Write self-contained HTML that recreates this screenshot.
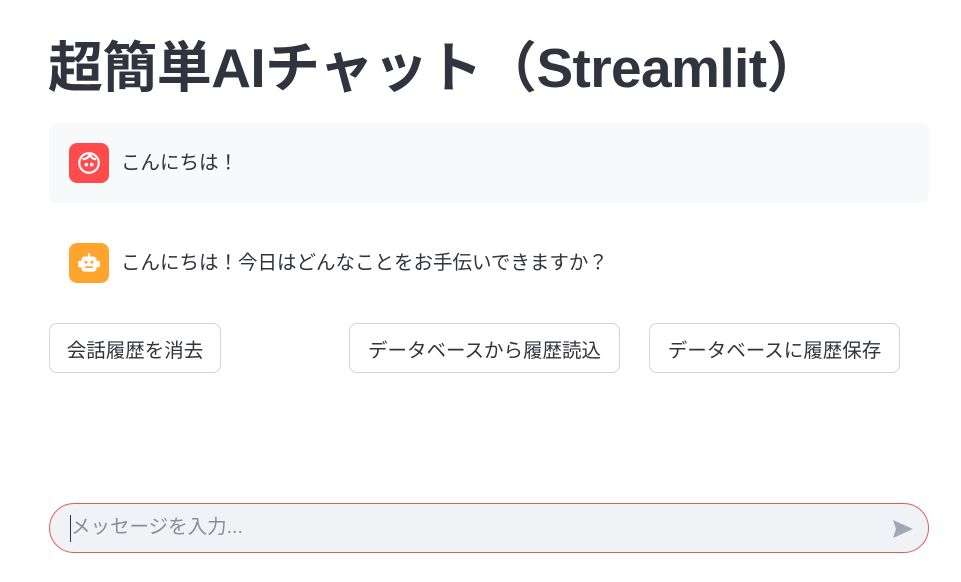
<!DOCTYPE html>
<html><head><meta charset="utf-8"><style>
*{box-sizing:border-box;margin:0;padding:0}
body{width:961px;height:582px;background:#fff;font-family:"Liberation Sans","Noto Sans CJK JP",sans-serif;color:#31333f;position:relative;overflow:hidden}
h1{position:absolute;left:48px;top:31px;font-size:55px;font-weight:700;letter-spacing:-0.6px;white-space:nowrap;font-family:"Liberation Sans","Noto Sans CJK JP",sans-serif;line-height:74px}
.msg{position:absolute;left:49px;width:880px;height:80px;border-radius:8px}
.av{position:absolute;left:20px;top:20px;width:40px;height:40px;border-radius:8px;display:flex;align-items:center;justify-content:center}
.txt{position:absolute;left:72px;top:27px;font-size:19.5px;line-height:26px;white-space:nowrap}
.btn{position:absolute;top:323px;height:50px;border:1px solid #d3d4d8;border-radius:8px;background:#fff;font-size:19.5px;display:flex;align-items:center;justify-content:center;white-space:nowrap}
.inp{position:absolute;left:49px;top:503px;width:880px;height:50px;border:1px solid #e35b5b;border-radius:25px;background:#f0f2f6}
</style></head><body>
<h1>超簡単AIチャット（Streamlit）</h1>
<div class="msg" style="top:123px;background:#f8f9fb">
 <div class="av" style="background:#ff4b4b"><svg width="26" height="26" viewBox="0 0 24 24" fill="none" stroke="#fff" stroke-width="2"><circle cx="12" cy="12" r="9"/><path d="M6 8.5c3 0 5.5-1.5 7-4.5M13 4.5c1 2.5 3 4 5.5 4"/><circle cx="9.5" cy="13.5" r=".7" fill="#fff"/><circle cx="14.5" cy="13.5" r=".7" fill="#fff"/></svg></div>
 <div class="txt">こんにちは！</div>
</div>
<div class="msg" style="top:223px">
 <div class="av" style="background:#ffa52e"><svg width="26" height="26" viewBox="0 0 24 24" fill="#fff"><rect x="11" y="3" width="2" height="3"/><rect x="5" y="6" width="14" height="14" rx="3"/><rect x="2" y="10" width="3" height="6" rx="1"/><rect x="19" y="10" width="3" height="6" rx="1"/><rect x="8" y="10" width="2.5" height="2.5" fill="#ffa52e"/><rect x="13.5" y="10" width="2.5" height="2.5" fill="#ffa52e"/><rect x="8.5" y="15" width="7" height="1.6" fill="#ffa52e"/></svg></div>
 <div class="txt">こんにちは！今日はどんなことをお手伝いできますか？</div>
</div>
<div class="btn" style="left:49px;width:172px">会話履歴を消去</div>
<div class="btn" style="left:349px;width:271px">データベースから履歴読込</div>
<div class="btn" style="left:649px;width:251px">データベースに履歴保存</div>
<div class="inp">
 <div style="position:absolute;left:20px;top:11px;width:1px;height:27px;background:#31333f"></div>
 <div style="position:absolute;left:21px;top:10px;font-size:19.5px;line-height:27px;color:#8c8d96">メッセージを入力...</div>
 <svg style="position:absolute;left:842px;top:15px" width="22" height="20" viewBox="0 0 22 20"><path d="M1 1L21 10L1 19L4 10Z" fill="#a3a6b4"/></svg>
</div>
</body></html>
